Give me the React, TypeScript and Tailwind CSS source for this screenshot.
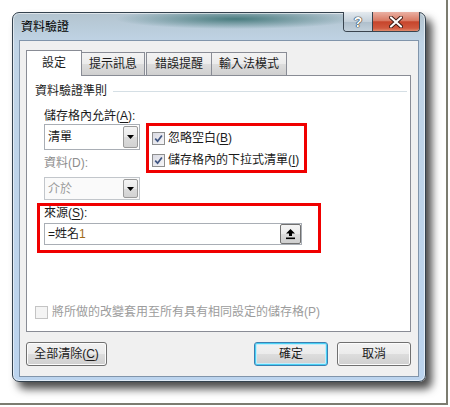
import type { ReactNode } from 'react';

function U({ children }: { children: ReactNode }) {
    return <span className="underline underline-offset-[2px]">{children}</span>;
}

function Check({ checked, disabled }: { checked?: boolean; disabled?: boolean }) {
    if (disabled) {
        return <span className="block h-[13px] w-[13px] shrink-0 border border-[#c4c4c4] bg-[#f4f4f4]" />;
    }
    return (
        <span className="flex h-[13px] w-[13px] shrink-0 items-center justify-center border border-[#8e8f8f] bg-[linear-gradient(135deg,#d9dae3,#f6f6f8)]">
            {checked && (
                <svg viewBox="0 0 9 9" className="h-[9px] w-[9px]">
                    <path d="M1.2 4.6 L3.6 7.2 L7.9 1.4" fill="none" stroke="#3f5582" strokeWidth="1.7" />
                </svg>
            )}
        </span>
    );
}

function Combo({ text, disabled }: { text: string; disabled?: boolean }) {
    return (
        <div
            className={
                disabled
                    ? 'flex h-[23px] w-[96px] border border-[#c2c6cb] bg-[#fafafa]'
                    : 'flex h-[26px] w-[96px] border border-[#a9aeb5] bg-white'
            }
        >
            <span className={disabled ? 'flex flex-1 items-center pl-[3px] text-[#9a9a9a]' : 'flex flex-1 items-center pl-[3px]'}>
                {text}
            </span>
            <span className="m-px flex w-[15px] items-center justify-center rounded-[2px] border border-[#9a9a9a] bg-[linear-gradient(#f4f4f4,#e9e9e9_50%,#dcdcdc_51%,#d2d2d2)]">
                <svg viewBox="0 0 7 4" className="h-[4px] w-[7px]">
                    <path d="M0 0 H7 L3.5 4 Z" fill="#000" />
                </svg>
            </span>
        </div>
    );
}

export default function App() {
    return (
        <div className="h-[405px] w-[448px] border-b-2 border-r-2 border-[#7c7c70] bg-white pl-[12px] pt-[12px] font-['Liberation_Sans','Noto_Sans_CJK_TC',sans-serif] text-[12px] leading-[14px] text-[#1b1b1b]">
            {/* Window */}
            <div className="flex h-[370px] w-[414px] flex-col rounded-[7px] border border-[#34424e] bg-[radial-gradient(ellipse_120px_10px_at_54%_6px,rgba(45,105,105,0.8),transparent),linear-gradient(180deg,#b3c4cf,#c0d4e6_30px,#bcd4ee)] shadow-[6px_7px_9px_rgba(0,0,0,0.7),inset_0_0_0_1px_rgba(255,255,255,0.55)]">
                {/* Title bar */}
                <div className="flex h-[27px] shrink-0 items-start pl-[8px]">
                    <span className="mt-[7px] text-black">資料驗證</span>
                    <div className="-mt-px ml-auto mr-[5px] flex h-[20px] overflow-hidden rounded-b-[4px] border border-t-0 border-[#39444f]">
                        <div className="flex w-[28px] items-center justify-center bg-[linear-gradient(#e4eaef,#c4d0da_50%,#aebecb_51%,#c2d0db)] text-[14px] font-bold text-white [text-shadow:0_0_1px_#1c2630,0_0_1px_#1c2630,0_0_1px_#1c2630]">
                            ?
                        </div>
                        <div className="flex w-[47px] items-center justify-center border-l border-[#39444f] bg-[linear-gradient(#eab0a3,#d97a64_45%,#c7452c_52%,#d0593f_85%,#e08a6c)]">
                            <svg viewBox="0 0 14 12" className="h-[12px] w-[14px]">
                                <path d="M2 1.5 L12 10.5 M12 1.5 L2 10.5" stroke="#3b1a14" strokeWidth="4" strokeLinecap="round" />
                                <path d="M2 1.5 L12 10.5 M12 1.5 L2 10.5" stroke="#fff" strokeWidth="2.2" strokeLinecap="round" />
                            </svg>
                        </div>
                    </div>
                </div>

                {/* Client area */}
                <div className="mx-[6px] mb-[4px] flex flex-1 flex-col border border-[#8195ab] bg-[#f0f0f0] pl-[6px] pr-[7px] pt-[9px]">
                    {/* Tabs */}
                    <div className="relative z-10 -mb-px flex h-[26px] items-end">
                        <div className="flex h-[26px] w-[56px] items-center justify-center border border-b-0 border-[#898c95] bg-white pb-[1px]">
                            設定
                        </div>
                        <div className="flex h-[24px] w-[63px] items-center justify-center border border-l-0 border-[#898c95] bg-[linear-gradient(#f3f3f3,#ebebeb_50%,#dddddd_51%,#cfcfcf)]">
                            提示訊息
                        </div>
                        <div className="ml-px flex h-[24px] w-[66px] items-center justify-center border border-[#898c95] bg-[linear-gradient(#f3f3f3,#ebebeb_50%,#dddddd_51%,#cfcfcf)]">
                            錯誤提醒
                        </div>
                        <div className="flex h-[24px] w-[75px] items-center justify-center border border-l-0 border-[#898c95] bg-[linear-gradient(#f3f3f3,#ebebeb_50%,#dddddd_51%,#cfcfcf)]">
                            輸入法模式
                        </div>
                    </div>

                    {/* Tab panel */}
                    <div className="flex h-[257px] flex-col border border-[#898c95] bg-white">
                        <div className="mt-[8px] flex h-[14px] items-center gap-[6px] pl-[8px] pr-[3px]">
                            <span>資料驗證準則</span>
                            <span className="flex-1 border-t border-[#d5dfe5]" />
                        </div>

                        <div className="mt-[11px] flex pl-[17px]">
                            <div className="flex w-[96px] flex-col">
                                <span className="whitespace-nowrap">
                                    儲存格內允許(<U>A</U>):
                                </span>
                                <div className="mt-px">
                                    <Combo text="清單" />
                                </div>
                                <span className="mt-[6px] text-[#8d8d8d]">資料(D):</span>
                                <div className="mt-[7px]">
                                    <Combo text="介於" disabled />
                                </div>
                            </div>

                            <div className="ml-[6px] mt-[14px] flex h-[50px] w-[161px] flex-col gap-[6px] border-[3px] border-[#f00000] pl-[3px] pt-[4px]">
                                <div className="flex h-[16px] items-center gap-[3px]">
                                    <Check checked />
                                    <span>
                                        忽略空白(<U>B</U>)
                                    </span>
                                </div>
                                <div className="flex h-[16px] items-center gap-[3px]">
                                    <Check checked />
                                    <span className="whitespace-nowrap">
                                        儲存格內的下拉式清單(<U>I</U>)
                                    </span>
                                </div>
                            </div>
                        </div>

                        {/* Source */}
                        <div className="ml-[10px] mt-[3px] flex h-[50px] w-[284px] flex-col border-[3px] border-[#f00000] pl-[4px]">
                            <span>
                                來源(<U>S</U>):
                            </span>
                            <div className="mt-[3px] flex h-[22px] w-[258px] border border-[#a9aeb5] bg-white">
                                <span className="flex flex-1 items-center pl-[3px]">
                                    =姓名<span className="text-[#a06a16]">1</span>
                                </span>
                                <span className="flex w-[21px] items-center justify-center rounded-[2px] border border-[#707070] bg-[linear-gradient(#f4f4f4,#ebebeb_50%,#dddddd_51%,#cfcfcf)]">
                                    <svg viewBox="0 0 11 12" className="h-[12px] w-[11px]">
                                        <path d="M5.5 1 L10 5.5 H7 V8 H4 V5.5 H1 Z" fill="#000" />
                                        <rect x="1" y="9.5" width="9" height="1.6" fill="#000" />
                                    </svg>
                                </span>
                            </div>
                        </div>

                        <div className="mb-[11px] mt-auto flex h-[16px] items-center gap-[4px] pl-[8px] text-[#9c9c9c]">
                            <Check disabled />
                            <span>將所做的改變套用至所有具有相同設定的儲存格(P)</span>
                        </div>
                    </div>

                    {/* Buttons */}
                    <div className="mt-[10px] flex h-[24px]">
                        <button className="flex h-[24px] w-[81px] items-center justify-center rounded-[3px] border border-[#707070] bg-[linear-gradient(#f2f2f2,#ebebeb_50%,#dddddd_51%,#cfcfcf)] shadow-[inset_0_0_0_1px_#fcfcfc]">
                            全部清除(<U>C</U>)
                        </button>
                        <button className="ml-auto flex h-[24px] w-[74px] items-center justify-center rounded-[3px] border border-[#3c7fb1] bg-[linear-gradient(#f2f2f2,#ebebeb_50%,#dddddd_51%,#cfcfcf)] shadow-[inset_0_0_0_1px_#48d0f4,inset_0_0_0_2px_#c4ecfb]">
                            確定
                        </button>
                        <button className="ml-[9px] flex h-[24px] w-[74px] items-center justify-center rounded-[3px] border border-[#707070] bg-[linear-gradient(#f2f2f2,#ebebeb_50%,#dddddd_51%,#cfcfcf)] shadow-[inset_0_0_0_1px_#fcfcfc]">
                            取消
                        </button>
                    </div>
                </div>
            </div>
        </div>
    );
}
